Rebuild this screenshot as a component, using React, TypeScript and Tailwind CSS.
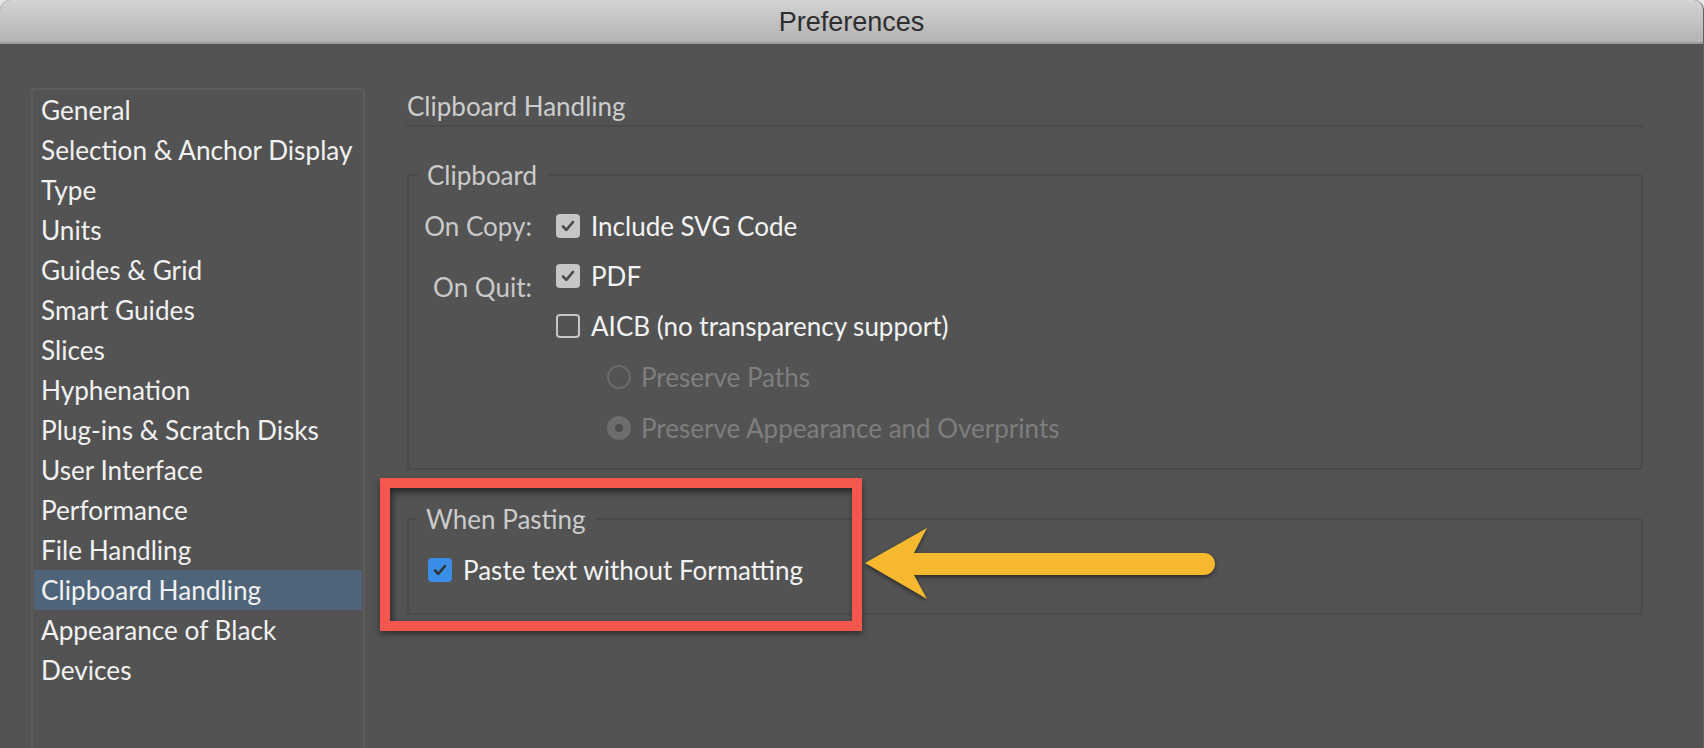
import React from "react";

const items = [
  "General",
  "Selection & Anchor Display",
  "Type",
  "Units",
  "Guides & Grid",
  "Smart Guides",
  "Slices",
  "Hyphenation",
  "Plug-ins & Scratch Disks",
  "User Interface",
  "Performance",
  "File Handling",
  "Clipboard Handling",
  "Appearance of Black",
  "Devices",
];

function Check({ color }: { color: string }) {
  return (
    <svg width="18" height="18" viewBox="0 0 18 18" fill="none">
      <path d="M4 9.5 L7.3 12.8 L14 5" stroke={color} strokeWidth="2.6" strokeLinecap="round" strokeLinejoin="round" />
    </svg>
  );
}

function GrayBox() {
  return (
    <div className="w-[24px] h-[24px] rounded-[4px] bg-[#c6c6c6] flex items-center justify-center shrink-0">
      <Check color="#4a4a4a" />
    </div>
  );
}

function EmptyBox() {
  return <div className="w-[24px] h-[24px] rounded-[4px] border-2 border-[#c6c6c6] shrink-0" />;
}

function BlueBox() {
  return (
    <div className="w-[24px] h-[24px] rounded-[4px] bg-[#3b8ee8] flex items-center justify-center shrink-0">
      <Check color="#2f3338" />
    </div>
  );
}

export default function App() {
  return (
    <div
      className="relative w-[1704px] h-[748px] overflow-hidden bg-[#e6e6e6]"
      style={{ fontFamily: "Lato, 'Open Sans', sans-serif" }}
    >
      <div className="h-full flex flex-col bg-[#535353] rounded-t-[10px] overflow-hidden border-r border-[#5f5f5f]">
        <div
          className="h-[44px] shrink-0 bg-gradient-to-b from-[#d3d3d3] to-[#b3b3b3] border-b-2 border-[#9a9a9a] flex items-center justify-center text-[27px] text-[#2e2e2e] pt-[3px]"
          style={{ fontFamily: "'Liberation Sans', Arial, sans-serif" }}
        >
          Preferences
        </div>
        <div className="flex flex-1 pl-[31px] pt-[44px]">
          {/* Sidebar */}
          <div className="w-[334px] h-[720px] shrink-0 border-2 border-[#5c5c5c] rounded-[4px] px-[1px]">
            {items.map((it) => (
              <div
                key={it}
                className={`h-[40px] leading-[40px] pl-[7px] text-[26.2px] text-[#f1f1f1] whitespace-nowrap ${
                  it === "Clipboard Handling" ? "bg-[#4f6479]" : ""
                }`}
              >
                {it}
              </div>
            ))}
          </div>

          {/* Right panel */}
          <div className="ml-[41px] w-[1237px] pt-[3px]">
            <div className="text-[26px] leading-[30px] text-[#cdcdcd] pl-[1px] pb-[4px] border-b-2 border-[#4a4a4a]">
              Clipboard Handling
            </div>

            <fieldset className="mt-[33px] ml-[1px] border-2 border-[#4a4a4a] rounded-[4px] px-0 pt-[11px] pb-[15px]">
              <legend className="ml-[9px] px-[9px] text-[26px] leading-[30px] text-[#cbcbcb]">Clipboard</legend>
              <div className="grid grid-cols-[123px_1fr] gap-x-[24px] text-[26px] leading-[30px]">
                <div className="h-[50px] flex items-center justify-end text-[#c9c9c9]">On Copy:</div>
                <div className="h-[50px] flex items-center gap-[11px] text-[#f3f3f3]">
                  <GrayBox />
                  <span>Include SVG Code</span>
                </div>

                <div className="h-[50px] flex items-center justify-end text-[#c9c9c9]">
                  <span className="translate-y-[11px]">On Quit:</span>
                </div>
                <div className="h-[50px] flex items-center gap-[11px] text-[#f3f3f3]">
                  <GrayBox />
                  <span>PDF</span>
                </div>

                <div className="h-[50px]" />
                <div className="h-[50px] flex items-center gap-[11px] text-[#f3f3f3]">
                  <EmptyBox />
                  <span>AICB (no transparency support)</span>
                </div>

                <div className="h-[51px]" />
                <div className="h-[51px] flex items-center gap-[10px] pl-[51px] text-[#7e7e7e]">
                  <div className="w-[24px] h-[24px] rounded-full border-2 border-[#6a6a6a] shrink-0" />
                  <span>Preserve Paths</span>
                </div>

                <div className="h-[51px]" />
                <div className="h-[51px] flex items-center gap-[10px] pl-[51px] text-[#7e7e7e]">
                  <div className="w-[24px] h-[24px] rounded-full bg-[#6d6d6d] flex items-center justify-center shrink-0">
                    <div className="w-[8px] h-[8px] rounded-full bg-[#4c4c4c]" />
                  </div>
                  <span>Preserve Appearance and Overprints</span>
                </div>
              </div>
            </fieldset>

            <fieldset className="mt-[34px] ml-[1px] border-2 border-[#4a4a4a] rounded-[4px] px-0 pt-[11px] pb-[18px]">
              <legend className="ml-[8px] px-[9px] text-[26px] leading-[30px] text-[#cbcbcb]">When Pasting</legend>
              <div className="h-[50px] flex items-center gap-[11px] pl-[19px] text-[26px] leading-[30px] text-[#f3f3f3]">
                <BlueBox />
                <span>Paste text without Formatting</span>
              </div>
            </fieldset>
          </div>
        </div>
      </div>

      {/* Annotation: red highlight box */}
      <div className="absolute left-[380px] top-[478px] w-[482px] h-[153px] border-[10px] border-[#f4574e] shadow-[0_3px_6px_rgba(0,0,0,0.45),inset_2px_4px_6px_rgba(0,0,0,0.55)]" />

      {/* Annotation: arrow */}
      <svg
        className="absolute left-[855px] top-[520px]"
        width="370"
        height="90"
        viewBox="0 0 370 90"
        style={{ filter: "drop-shadow(0 2px 2px rgba(0,0,0,0.5))" }}
      >
        <path d="M10 43 L72 8 L59 33 L349 33 A11 11 0 0 1 349 55 L59 55 L72 79 Z" fill="#f6b82e" />
      </svg>
    </div>
  );
}
